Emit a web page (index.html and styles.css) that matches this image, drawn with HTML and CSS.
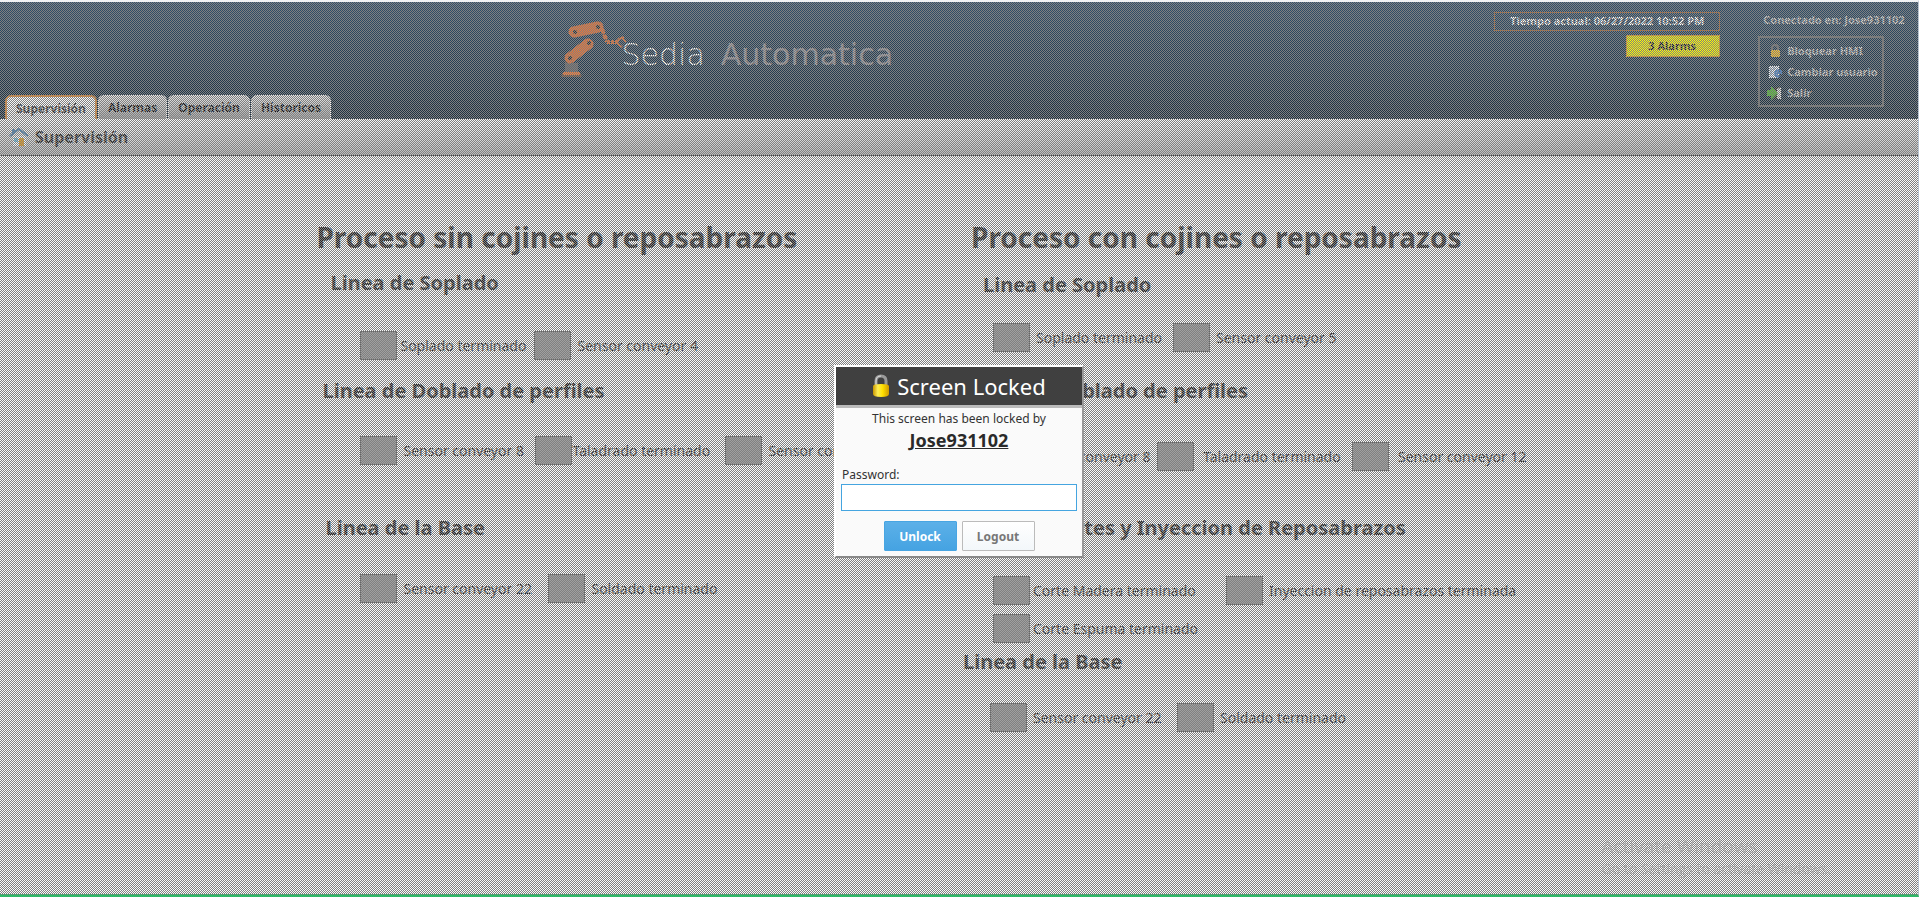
FILE: index.html
```
<!DOCTYPE html>
<html lang="es">
<head>
<meta charset="utf-8">
<title>Sedia Automatica - Supervisión</title>
<link rel="stylesheet" href="styles.css">
</head>
<body>
<div class="app">
  <header class="header">
    <nav class="tabs">
      <button class="tab tab-active">Supervisión</button>
      <button class="tab">Alarmas</button>
      <button class="tab">Operación</button>
      <button class="tab">Historicos</button>
    </nav>
    <div class="brand">
      <svg class="robot" width="72" height="62" viewBox="0 0 72 62" aria-hidden="true">
        <path d="M5 42h13v9H5z" fill="#67676a"/>
        <path d="M3 51h17l2 5H1z" fill="#75543f"/>
        <path d="M3 51h17v3H3z" fill="#ff7a30"/>
        <path d="M10 37 28 23M14 11 38 6" stroke="#f27432" stroke-width="11" stroke-linecap="round"/>
        <circle cx="10" cy="37" r="2" fill="#333"/><circle cx="29" cy="22" r="2" fill="#333"/>
        <circle cx="15" cy="11" r="2" fill="#333"/><circle cx="38" cy="6" r="2" fill="#333"/>
        <path d="m42 8 5 13" stroke="#f27432" stroke-width="4" stroke-dasharray="5 1"/>
        <path d="M47 21h10" stroke="#f27432" stroke-width="4" stroke-dasharray="3 1"/>
        <path d="m64 16-5 2-2 3 2 3 3 2M61 16l5 5" fill="none" stroke="#f27432" stroke-width="2"/>
      </svg>
      <span class="brand-thin">Sedia</span>
      <span class="brand-bold">Automatica</span>
    </div>
    <div class="status">
      <div class="clock">Tiempo actual: 06/27/2022 10:52 PM</div>
      <button class="alarms">3 Alarms</button>
    </div>
    <div class="session">
      <div class="user">Conectado en: Jose931102</div>
      <div class="menu">
        <button class="menu-item">
          <svg width="16" height="16" viewBox="0 0 16 16" aria-hidden="true"><path d="M5 8V5q0-3 3-3t3 3v3" fill="none" stroke="#777" stroke-width="2"/><path d="M4 7h9v7H4z" fill="#ffc52b"/></svg>
          Bloquear HMI</button>
        <button class="menu-item">
          <svg width="16" height="16" viewBox="0 0 16 16" aria-hidden="true"><path d="M2 2h10v12H2z" fill="#e3edf8"/><path d="M4 4v7M7 3v3" stroke="#8ba5c4"/><path d="M13 7a3 3 0 1 0 0 5M10 9h4V6" fill="none" stroke="#3f83d6" stroke-width="2"/></svg>
          Cambiar usuario</button>
        <button class="menu-item">
          <svg width="16" height="16" viewBox="0 0 16 16" aria-hidden="true"><path d="M7 2h7v12H7z" fill="#333"/><path d="m10 4 4-2v12h-4z" fill="#ddd"/><path d="M0 5h4V1l7 7-7 7v-4H0z" fill="#50c030"/></svg>
          Salir</button>
      </div>
    </div>
  </header>

  <div class="titlebar">
    <svg width="20" height="20" viewBox="0 0 20 20" aria-hidden="true"><path d="M4 9h13v10H4z" fill="#eef3f8"/><path d="M3 2h3v5H3z" fill="#4382b9"/><path d="m1 9 9-7 9 7" fill="none" stroke="#4382b9" stroke-width="2"/><path d="M5 11h4v4H5z" fill="#72c7e8"/><path d="M10 11h5v8h-5z" fill="#f2a31b"/></svg>
    <span>Supervisión</span>
  </div>

  <main class="board">
    <section class="process">
      <h1>Proceso sin cojines o reposabrazos</h1>
      <div class="line line-blow">
        <h2>Linea de Soplado</h2>
        <div class="sensors"><div class="sensor tight"><i></i>Soplado terminado</div><div class="sensor"><i></i>Sensor conveyor 4</div></div>
      </div>
      <div class="line line-bend">
        <h2>Linea de Doblado de perfiles</h2>
        <div class="sensors"><div class="sensor"><i></i>Sensor conveyor 8</div><div class="sensor flush"><i></i>Taladrado terminado</div><div class="sensor"><i></i>Sensor conveyor 12</div></div>
      </div>
      <div class="line line-base">
        <h2>Linea de la Base</h2>
        <div class="sensors"><div class="sensor"><i></i>Sensor conveyor 22</div><div class="sensor"><i></i>Soldado terminado</div></div>
      </div>
    </section>
    <section class="process process-cushion">
      <h1>Proceso con cojines o reposabrazos</h1>
      <div class="line line-blow">
        <h2>Linea de Soplado</h2>
        <div class="sensors"><div class="sensor"><i></i>Soplado terminado</div><div class="sensor"><i></i>Sensor conveyor 5</div></div>
      </div>
      <div class="line line-bend">
        <h2>Linea de Doblado de perfiles</h2>
        <div class="sensors"><div class="sensor flush"><i></i>Sensor conveyor 8</div><div class="sensor wide"><i></i>Taladrado terminado</div><div class="sensor wide"><i></i>Sensor conveyor 12</div></div>
      </div>
      <div class="line line-cut">
        <h2>Linea de Cortes y Inyeccion de Reposabrazos</h2>
        <div class="sensors"><div class="sensor tight"><i></i>Corte Madera terminado</div><div class="sensor"><i></i>Inyeccion de reposabrazos terminada</div><div class="sensor tight"><i></i>Corte Espuma terminado</div></div>
      </div>
      <div class="line line-base">
        <h2>Linea de la Base</h2>
        <div class="sensors"><div class="sensor"><i></i>Sensor conveyor 22</div><div class="sensor"><i></i>Soldado terminado</div></div>
      </div>
    </section>
  </main>
</div>

<div class="veil">
  <form class="dialog">
    <h3>
      <svg width="18" height="24" viewBox="0 0 18 24" aria-hidden="true"><defs><linearGradient id="gold"><stop stop-color="#c99700"/><stop offset=".3" stop-color="#ffee55"/><stop offset=".6" stop-color="#ffe000"/><stop offset="1" stop-color="#d09a00"/></linearGradient></defs><path d="M4 13V7q0-5 5-5t5 5v6" fill="none" stroke="#999" stroke-width="3"/><path d="M4 12V7q0-5 5-5" fill="none" stroke="#ddd"/><path d="M1 12q0-2 8-2t8 2v8q0 3-8 3t-8-3z" fill="url(#gold)"/></svg>
      Screen Locked</h3>
    <p class="reason">This screen has been locked by</p>
    <p class="owner">Jose931102</p>
    <label for="password">Password:</label>
    <input id="password" type="password">
    <div class="actions">
      <button type="button" class="primary">Unlock</button>
      <button type="button">Logout</button>
    </div>
  </form>
</div>

<div class="watermark">
  <div class="watermark-title">Activate Windows</div>
  <div>Go to Settings to activate Windows.</div>
</div>
</body>
</html>
```
FILE: styles.css
```
* { box-sizing: border-box; }
body {
  margin: 0;
  font-family: "Noto Sans", sans-serif;
  color: #2a2a2a;
}
button { font-family: inherit; font-weight: bold; margin: 0; cursor: pointer; }
h1, h2, h3, p { margin: 0; }
svg { flex: none; }

.app {
  min-height: 100vh;
  display: flex;
  flex-direction: column;
  background: #fafafa;
  border-top: 2px solid #f0f2f4;
  border-right: 1px solid #b9c4d0;
  border-bottom: 3px solid #30b868;
}

.header {
  display: flex;
  height: 117px;
  background: linear-gradient(#30506c, #1c3040);
}
.tabs { display: flex; align-items: flex-end; gap: 1px; padding-left: 5px; width: 29%; }
.tab {
  height: 24px;
  padding: 0 9px;
  border: 1px solid #eee;
  border-bottom: 0;
  border-radius: 6px 6px 0 0;
  background: linear-gradient(#e4e4e4, #a8a8a8);
  color: #111;
  font-size: 12px;
}
.tab-active { border: 2px solid #f09030; border-bottom: 0; background: linear-gradient(#fafafa, #eee); color: #333; }

.brand { display: flex; align-items: flex-start; width: 49%; padding-top: 19px; font-family: "DejaVu Sans", sans-serif; font-size: 30px; line-height: 68px; color: #fff; }
.robot { margin: 0 -10px 0 4px; }
.brand-thin { font-weight: 200; margin-right: 16px; }
.brand-bold { color: #a39fa3; }

.status { display: flex; flex-direction: column; align-items: flex-end; gap: 4px; margin-left: auto; padding-top: 10px; }
.clock { border: 1px solid #b06c38; width: 226px; height: 19px; line-height: 16px; text-align: center; font-size: 11px; font-weight: bold; color: #fff; }
.alarms { width: 94px; height: 22px; padding: 0 2px 2px 0; border: 1px solid #f0a020; background: #fffa00; font-size: 11px; color: #222; }
.session { width: 198px; padding: 10px 0 0 38px; font-size: 11px; font-weight: bold; color: #d0d0d0; white-space: nowrap; }
.user { padding-left: 5px; line-height: 16px; }
.menu { width: 126px; height: 71px; margin-top: 8px; padding: 2px 7px; border: 2px solid #777; display: flex; flex-direction: column; }
.menu-item { display: flex; align-items: center; gap: 4px; height: 21px; padding: 0; border: 0; background: none; color: inherit; font-size: 11px; }

.titlebar {
  display: flex;
  align-items: center;
  gap: 6px;
  height: 37px;
  padding-left: 9px;
  border-bottom: 1px solid #444;
  background: linear-gradient(#fafafa, #bcbcbc);
  font-size: 16px;
  font-weight: bold;
}

.board {
  flex: 1;
  display: grid;
  grid-template-columns: 1fr 1fr;
  padding: 61px 16.5% 60px;
  white-space: nowrap;
}
h1 { font-size: 28px; line-height: 40px; }
h2 { font-size: 20px; line-height: 28px; }
.line-blow h2 { margin: 12px 0 34px 14px; }
.line-bend h2 { margin: 17px 0 31px 6px; }
.line-base h2 { margin: 49px 0 32px 9px; }
.sensors { display: grid; padding-left: 44px; row-gap: 9px; font-size: 14px; line-height: 29px; }
.line-blow .sensors { grid-template-columns: 174px auto; }
.line-bend .sensors { grid-template-columns: 175px 190px auto; }
.line-base .sensors { grid-template-columns: 188px auto; }
.sensor { display: flex; gap: 6px; }
.sensor i { flex: none; width: 37px; height: 29px; border: 1px solid #666; background: #a0a0a0; }
.tight { gap: 3px; }
.flush { gap: 0; }
.wide { gap: 9px; }

.process-cushion h1 { padding-left: 12px; }
.process-cushion .sensors { padding-left: 34px; }
.process-cushion .line-blow h2 { margin: 14px 0 24px 24px; }
.process-cushion .line-bend h2 { margin: 25px 0 37px 7px; }
.process-cushion .line-cut h2 { margin: 43px 0 34px 2px; }
.process-cushion .line-base h2 { margin: 5px 0 27px 4px; }
.process-cushion .line-blow .sensors { grid-template-columns: 180px auto; }
.process-cushion .line-bend .sensors { grid-template-columns: 164px 195px auto; }
.process-cushion .line-cut .sensors { grid-template-columns: 233px auto; }
.process-cushion .line-base .sensors { grid-template-columns: 187px auto; padding-left: 31px; }

/* Checkered glass pane that dims the page while it is locked */
.veil {
  position: fixed;
  inset: 2px 1px 2px 0;
  display: flex;
  align-items: center;
  justify-content: center;
  padding-top: 26px;
  background: repeating-conic-gradient(#808080 0 25%, transparent 0 50%) 0 0 / 2px 2px;
}
.dialog {
  width: 250px;
  display: flex;
  flex-direction: column;
  padding-bottom: 5px;
  border: 2px solid #fff;
  border-right-color: #999;
  border-bottom-color: #888;
  background: #fafafa;
  font-size: 12px;
  color: #333;
}
.dialog h3 { display: flex; align-items: center; justify-content: center; gap: 7px; height: 41px; padding-bottom: 1px; border-bottom: 3px solid #bbb; background: #404040; color: #fff; font-size: 22px; font-weight: normal; }
.reason { text-align: center; line-height: 22px; }
.owner { text-align: center; font-size: 18px; font-weight: bold; line-height: 20px; text-decoration: underline; color: #2a2a2a; }
.dialog label { margin: 16px 6px 0; line-height: 18px; }
.dialog input { height: 27px; margin: 0 5px; border: 1px solid #45a5e0; background: #fff; }
.actions { display: flex; justify-content: center; gap: 5px; margin-top: 10px; }
.actions button { width: 73px; height: 30px; padding: 0; border: 1px solid #bbb; border-radius: 1px; background: linear-gradient(#fff, #f3f7fa); color: #777; font-size: 12px; }
.actions .primary { border-color: #48a5e2; background: linear-gradient(#5cb0e8, #45a3e2); color: #fff; }

.watermark { position: fixed; right: 88px; bottom: 18px; font-family: "Open Sans", sans-serif; font-size: 14px; line-height: 20px; color: rgba(165, 165, 165, 0.7); pointer-events: none; }
.watermark-title { font-size: 19px; line-height: 26px; }
```
